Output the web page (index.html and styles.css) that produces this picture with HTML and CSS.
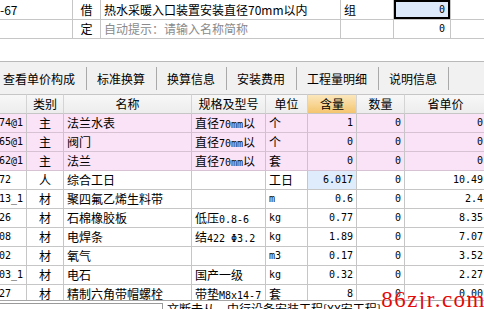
FILE: index.html
```html
<!DOCTYPE html>
<html lang="zh-CN">
<head>
    <meta charset="UTF-8">
    <title>定额子目 - 工料机</title>
    <link rel="stylesheet" href="styles.css">
</head>
<body>

    <div class="screen">
        <!-- upper grid: 定额子目 -->
        <div class="top-grid">
            <div class="trow first">
                <div class="tc t-code">-67</div>
                <div class="tc t-kind">借</div>
                <div class="tc t-name">热水采暖入口装置安装直径70mm以内</div>
                <div class="tc t-unit">组</div>
                <div class="tc t-qty num selected">0</div>
                <div class="tc t-rest"></div>
            </div>
            <div class="trow">
                <div class="tc t-code"></div>
                <div class="tc t-kind">定</div>
                <div class="tc t-name hint">自动提示：请输入名称简称</div>
                <div class="tc t-unit"></div>
                <div class="tc t-qty num">0</div>
                <div class="tc t-rest"></div>
            </div>
        </div>

        <!-- tabs -->
        <div class="toolbar">
            <div class="tab first">查看单价构成</div>
            <div class="tab">标准换算</div>
            <div class="tab">换算信息</div>
            <div class="tab">安装费用</div>
            <div class="tab">工程量明细</div>
            <div class="tab">说明信息</div>
        </div>

        <!-- lower grid: 人材机 -->
        <div class="grid">
            <div class="row head">
                <div class="c"></div>
                <div class="c">类别</div>
                <div class="c">名称</div>
                <div class="c">规格及型号</div>
                <div class="c">单位</div>
                <div class="c active">含量</div>
                <div class="c">数量</div>
                <div class="c">省单价</div>
            </div>
            <div class="row main">
                <div class="c code num">74@1</div>
                <div class="c kind">主</div>
                <div class="c">法兰水表</div>
                <div class="c">直径<span class="num">70mm</span>以</div>
                <div class="c">个</div>
                <div class="c num r">1</div>
                <div class="c num r">0</div>
                <div class="c num r">0</div>
            </div>
            <div class="row main">
                <div class="c code num">65@1</div>
                <div class="c kind">主</div>
                <div class="c">阀门</div>
                <div class="c">直径<span class="num">70mm</span>以</div>
                <div class="c">个</div>
                <div class="c num r">0</div>
                <div class="c num r">0</div>
                <div class="c num r">0</div>
            </div>
            <div class="row main">
                <div class="c code num">62@1</div>
                <div class="c kind">主</div>
                <div class="c">法兰</div>
                <div class="c">直径<span class="num">70mm</span>以</div>
                <div class="c">套</div>
                <div class="c num r">0</div>
                <div class="c num r">0</div>
                <div class="c num r">0</div>
            </div>
            <div class="row">
                <div class="c code num">72</div>
                <div class="c kind">人</div>
                <div class="c">综合工日</div>
                <div class="c"></div>
                <div class="c">工日</div>
                <div class="c num r current">6.017</div>
                <div class="c num r">0</div>
                <div class="c num r">10.49</div>
            </div>
            <div class="row">
                <div class="c code num">13_1</div>
                <div class="c kind">材</div>
                <div class="c">聚四氟乙烯生料带</div>
                <div class="c"></div>
                <div class="c num">m</div>
                <div class="c num r">0.6</div>
                <div class="c num r">0</div>
                <div class="c num r">2.4</div>
            </div>
            <div class="row">
                <div class="c code num">26</div>
                <div class="c kind">材</div>
                <div class="c">石棉橡胶板</div>
                <div class="c">低压<span class="num">0.8-6</span></div>
                <div class="c num">kg</div>
                <div class="c num r">0.77</div>
                <div class="c num r">0</div>
                <div class="c num r">8.35</div>
            </div>
            <div class="row">
                <div class="c code num">08</div>
                <div class="c kind">材</div>
                <div class="c">电焊条</div>
                <div class="c">结<span class="num">422 Φ3.2</span></div>
                <div class="c num">kg</div>
                <div class="c num r">1.89</div>
                <div class="c num r">0</div>
                <div class="c num r">7.07</div>
            </div>
            <div class="row">
                <div class="c code num">02</div>
                <div class="c kind">材</div>
                <div class="c">氧气</div>
                <div class="c"></div>
                <div class="c num">m3</div>
                <div class="c num r">0.17</div>
                <div class="c num r">0</div>
                <div class="c num r">3.52</div>
            </div>
            <div class="row">
                <div class="c code num">03_1</div>
                <div class="c kind">材</div>
                <div class="c">电石</div>
                <div class="c">国产一级</div>
                <div class="c num">kg</div>
                <div class="c num r">0.32</div>
                <div class="c num r">0</div>
                <div class="c num r">2.27</div>
            </div>
            <div class="row">
                <div class="c code num">27</div>
                <div class="c kind">材</div>
                <div class="c">精制六角带帽螺栓</div>
                <div class="c">带垫<span class="num">M8x14-7</span></div>
                <div class="c">套</div>
                <div class="c num r">8</div>
                <div class="c num r">0</div>
                <div class="c num r">0.00</div>
            </div>
        </div>

        <div class="status">
            <div class="status-box"></div>
            <div class="status-text">文断去从，中行设备安装工程[XX安工程]</div>
        </div>

        <div class="watermark">86zjr.com</div>
    </div>

</body>
</html>
```

FILE: styles.css
```css
body {
    margin: 0;
    background-color: #ffffff;
    font-family: 'Noto Sans CJK SC', sans-serif;
    font-size: 12px;
    color: #000000;
}

.screen {
    position: relative;
    width: 484px;
    height: 309px;
    overflow: hidden;
}

/* number text, close to the narrow song digits */
.num {
    font-family: 'DejaVu Sans Mono', monospace;
    font-size: 10px;
}

.c.num,
.tc.num {
    font-size: 10px;
}

/* upper grid */
.top-grid {
    width: 484px;
}

.trow {
    display: grid;
    grid-template-columns: 73px 28px 240px 53px 57px 33px;
    height: 19px;
}

.trow.first {
    height: 20px;
}

.tc {
    border-right: 1px solid #c6c6c6;
    border-bottom: 1px solid #c6c6c6;
    padding: 0 3px;
    line-height: 18px;
    white-space: nowrap;
    overflow: hidden;
}

.trow.first .tc {
    line-height: 19px;
}

.t-code {
    padding-left: 0;
}

.t-kind {
    text-align: center;
    padding: 0;
}

.t-qty {
    text-align: right;
    padding-right: 5px;
}

.t-rest {
    border-right: none;
}

.hint {
    color: #8a8a8a;
}

.selected {
    background-color: #dce9fa;
    box-shadow: inset 0 0 0 2px #000000;
}

/* tab strip */
.toolbar {
    display: flex;
    align-items: center;
    margin-top: 22px;
    height: 32px;
    border-top: 1px solid #b9b9b9;
    background-color: #f1f1f1;
}

.tab {
    height: 23px;
    line-height: 23px;
    padding: 0 11px 0 10px;
    border-right: 1px solid #a9a9a9;
    white-space: nowrap;
}

.tab.first {
    padding-left: 3px;
}

/* lower grid */
.grid {
    height: 206px;
    overflow: hidden;
}

.row {
    display: grid;
    grid-template-columns: 27px 37px 128px 74px 42px 49px 48px 82px;
    width: 487px;
    height: 19px;
}

.row .c {
    border-right: 1px solid #c6c6c6;
    border-bottom: 1px solid #c6c6c6;
    padding: 0 3px;
    line-height: 18px;
    white-space: nowrap;
    overflow: hidden;
}

.row.head {
    height: 20px;
    background: linear-gradient(#f8f8f8, #ececec);
}

.row.head .c {
    border-top: 1px solid #c6c6c6;
    border-right-color: #d4d4d4;
    text-align: center;
    line-height: 18px;
}

.row.head .c.active {
    background: linear-gradient(#fbe7bd, #f4c56e);
}

.row.main {
    background-color: #fbe3f7;
}

.row.main .c {
    border-bottom-color: #d7c2d3;
}

.c.code {
    padding-left: 0;
    text-indent: -1px;
}

.c.kind {
    text-align: center;
    padding: 0;
}

.c.r {
    text-align: right;
}

.c.current {
    background-color: #dfecfb;
}

/* bottom strip */
.status {
    display: flex;
    height: 9px;
    border-top: 1px solid #a6a6a6;
}

.status-box {
    width: 162px;
    margin-top: 2px;
    border-top: 1px solid #9a9a9a;
    border-right: 1px solid #9a9a9a;
}

.status-text {
    padding-left: 4px;
    line-height: 16px;
    white-space: nowrap;
}

/* site watermark over the corner */
.watermark {
    position: absolute;
    right: -2px;
    bottom: -4px;
    font-family: 'Liberation Serif', serif;
    font-size: 23px;
    letter-spacing: 1.5px;
    color: #e20a0a;
    text-shadow: 0 0 2px #ffffff;
}
```
